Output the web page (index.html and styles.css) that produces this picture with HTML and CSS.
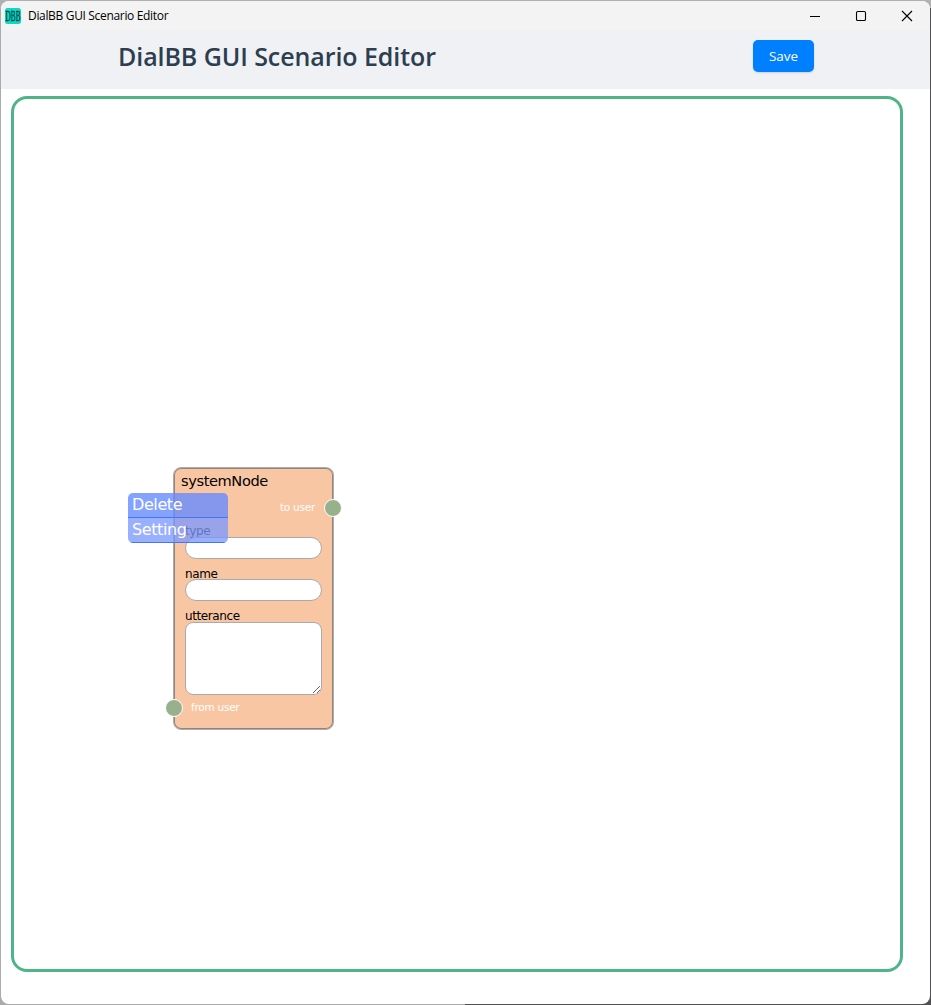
FILE: index.html
```html
<!DOCTYPE html>
<html lang="en">
<head>
<meta charset="utf-8">
<title>DialBB GUI Scenario Editor</title>
<link rel="stylesheet" href="styles.css">
</head>
<body>
<div class="window">
  <div class="titlebar">
    <svg class="app-icon" width="16" height="16" viewBox="0 0 16 16"><rect width="16" height="16" rx="2.5" fill="#08dcc8"/><text class="app-icon-text" transform="translate(.6 13) scale(.52 1)">DBB</text></svg>
    <span class="window-title">DialBB GUI Scenario Editor</span>
    <div class="controls">
      <svg width="12" height="12" viewBox="0 0 12 12"><path d="M1 6.5H11"/></svg>
      <svg width="12" height="12" viewBox="0 0 12 12"><rect x="1.5" y="1.5" width="9" height="9" rx="1.3"/></svg>
      <svg width="12" height="12" viewBox="0 0 12 12"><path d="M1 1L11 11M11 1L1 11"/></svg>
    </div>
  </div>
  <header class="header">
    <h1 class="heading">DialBB GUI Scenario Editor</h1>
    <button class="save">Save</button>
  </header>
  <main class="canvas">
    <section class="node">
      <div class="node-title">systemNode</div>
      <div class="port output"><span class="port-label">to user</span><i class="socket"></i></div>
      <div class="fields">
        <label class="label">type</label><input class="field">
        <label class="label low">name</label><input class="field">
        <label class="label low">utterance</label><textarea class="area"></textarea>
      </div>
      <div class="port input"><i class="socket"></i><span class="port-label from">from user</span></div>
    </section>
    <div class="menu">
      <div class="item">Delete</div>
      <div class="item second">Setting</div>
    </div>
  </main>
</div>
</body>
</html>
```
FILE: styles.css
```css
* { box-sizing: border-box; }
html { height: 100%; background: linear-gradient(90deg, #a9abad 0 50%, #505052 50%); }
body { margin: 0; height: 1005px; padding: 1px; background: linear-gradient(#b0b0b0 0 8px, transparent 8px); }
.window { height: 1003px; border-radius: 8px; background: #fff; overflow: hidden; }
.titlebar { height: 29px; display: flex; align-items: center; padding-left: 4px; background: #f3f3f3; }
.app-icon-text { font: 14px "Liberation Serif", serif; fill: #043c3a; stroke: #043c3a; stroke-width: .4px; }
.window-title { margin-left: 7px; font-family: "Open Sans", sans-serif; font-size: 12px; letter-spacing: -.33px; color: #000; }
.controls { margin-left: auto; margin-right: 17px; display: flex; gap: 34px; fill: none; stroke: #000; stroke-width: 1.1; }
.header { height: 59px; display: flex; align-items: flex-start; justify-content: space-between; padding: 10px 116px 0 117px; background: #f0f1f5; }
.heading { margin: -1px 0 0; font: 600 25px/34px "Open Sans", sans-serif; letter-spacing: -.08px; color: #2c3e50; white-space: nowrap; }
.save { width: 61px; height: 32px; padding: 0 0 1px; border: 0; border-radius: 5px; background: #007fff; color: #fff; font: 13.5px "Open Sans", sans-serif; box-shadow: 0 1px 2px #0002; }
.canvas { position: relative; width: 892px; height: 876px; margin: 7px 0 0 10px; border: 3px solid #4db587; border-radius: 16px; }
.node { position: absolute; left: 159px; top: 368px; width: 161px; height: 263px; padding: 1px; border: 1px solid #b0aaa8; border-radius: 8px; background: #f9c6a3; box-shadow: inset 0 0 0 1px #8f8680; font-family: "DejaVu Sans", sans-serif; }
.node-title { height: 26px; padding-left: 6px; font-size: 14.6px; line-height: 23px; letter-spacing: -.4px; }
.port { height: 26px; display: flex; align-items: center; color: #fff; font-size: 10.5px; letter-spacing: -.25px; }
.output { justify-content: flex-end; margin-right: -10px; }
.input { margin-left: -10px; }
.socket { width: 18px; height: 18px; border: 1px solid #fff; border-radius: 50%; background: #98b18d; }
.port-label { margin: -2px 9px 0 0; }
.port-label.from { margin-left: 8px; }
.fields { padding: 3px 10px 0; display: flex; flex-direction: column; }
.label { height: 13px; font-size: 12px; line-height: 14px; letter-spacing: -.4px; }
.low { line-height: 16px; }
.field { width: 137px; height: 22px; margin: 0 0 7px; border: 1px solid #aaa; border-radius: 11px; background: #fff; }
.area { width: 137px; height: 73px; margin: 1px 0 0; border: 1px solid #aaa; border-radius: 8px; background: #fff; resize: both; }
.menu { position: absolute; left: 114px; top: 394px; width: 100px; height: 50px; border-radius: 5px; overflow: hidden; color: #fff; font: 16px/23px "DejaVu Sans", sans-serif; letter-spacing: -.4px; }
.item { height: 25px; padding-left: 4px; border-bottom: 1px solid #4377f7; background: rgba(104, 139, 255, .8); }
.second { background: rgba(122, 152, 255, .77); }
```
